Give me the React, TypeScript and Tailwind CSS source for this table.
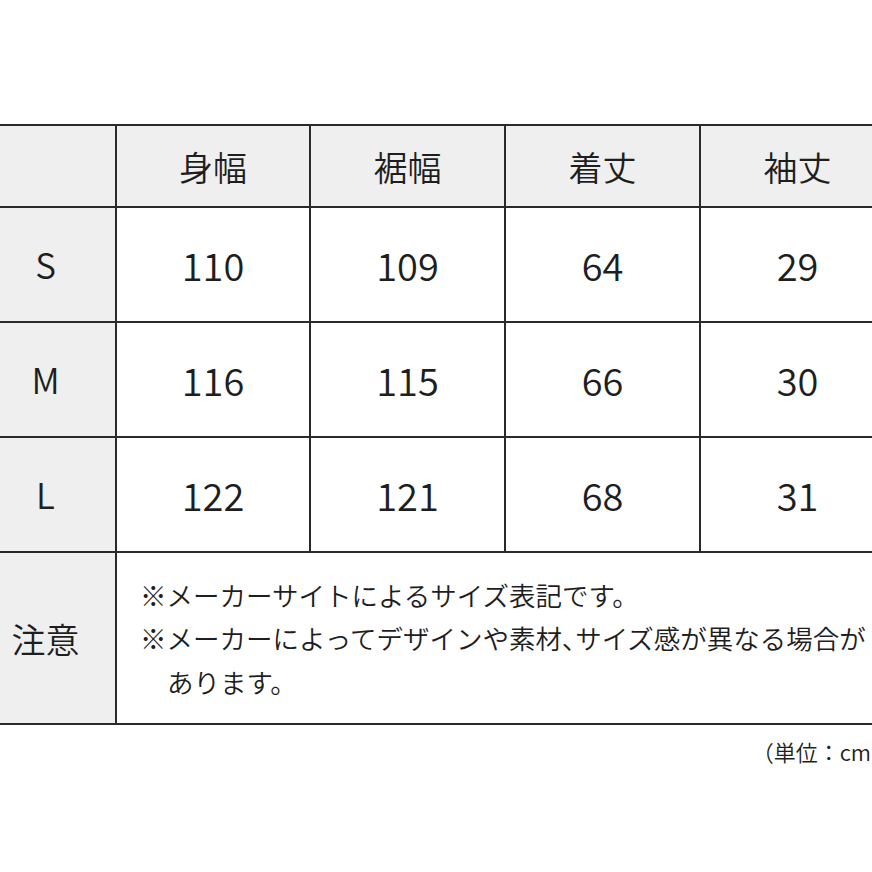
import React from 'react';

const FONT = '"Noto Sans CJK JP", "Noto Sans", sans-serif';

const headers = ['身幅', '裾幅', '着丈', '袖丈'];

const rows = [
  { size: 'S', values: ['110', '109', '64', '29'] },
  { size: 'M', values: ['116', '115', '66', '30'] },
  { size: 'L', values: ['122', '121', '68', '31'] },
];

export default function App() {
  return (
    <div className="w-[872px] h-[872px] overflow-hidden bg-white text-[#1e1e1e] font-[350]" style={{ fontFamily: FONT }}>
      <div className="w-[893px] pt-[124px]">
        <div className="grid grid-cols-[115px_194px_195px_195px_195px] border-t-2 border-[#2a2a2a]">
          {/* header row */}
          <div className="h-[82px] bg-[#efefef] border-b-2 border-[#2a2a2a]" />
          {headers.map((h) => (
            <div
              key={h}
              className="h-[82px] flex items-center justify-center bg-[#efefef] border-l-2 border-b-2 border-[#2a2a2a] text-[34px]"
            >
              {h}
            </div>
          ))}

          {/* size rows */}
          {rows.map((r) => (
            <React.Fragment key={r.size}>
              <div className="h-[115px] flex items-center justify-center bg-[#efefef] border-b-2 border-[#2a2a2a] text-[35px] pr-[24px]">
                {r.size}
              </div>
              {r.values.map((v, i) => (
                <div
                  key={i}
                  className="h-[115px] flex items-center justify-center border-l-2 border-b-2 border-[#2a2a2a] text-[38px]"
                >
                  {v}
                </div>
              ))}
            </React.Fragment>
          ))}

          {/* note row */}
          <div className="h-[172px] flex items-center justify-center bg-[#efefef] border-b-2 border-[#2a2a2a] text-[34px] pr-[24px]">
            注意
          </div>
          <div className="col-span-4 h-[172px] flex flex-col justify-center border-l-2 border-b-2 border-[#2a2a2a] pl-[23px] text-[26.5px] leading-[43.5px] whitespace-nowrap">
            <div>※メーカーサイトによるサイズ表記です。</div>
            <div>
              ※メーカーによってデザインや素材<span className="[font-feature-settings:'palt']">、</span>サイズ感が異なる場合が
            </div>
            <div className="pl-[27px]">あります。</div>
          </div>
        </div>

        <div className="mt-[14px] text-right text-[22px] leading-[24px]">（単位：cm）</div>
      </div>
    </div>
  );
}
